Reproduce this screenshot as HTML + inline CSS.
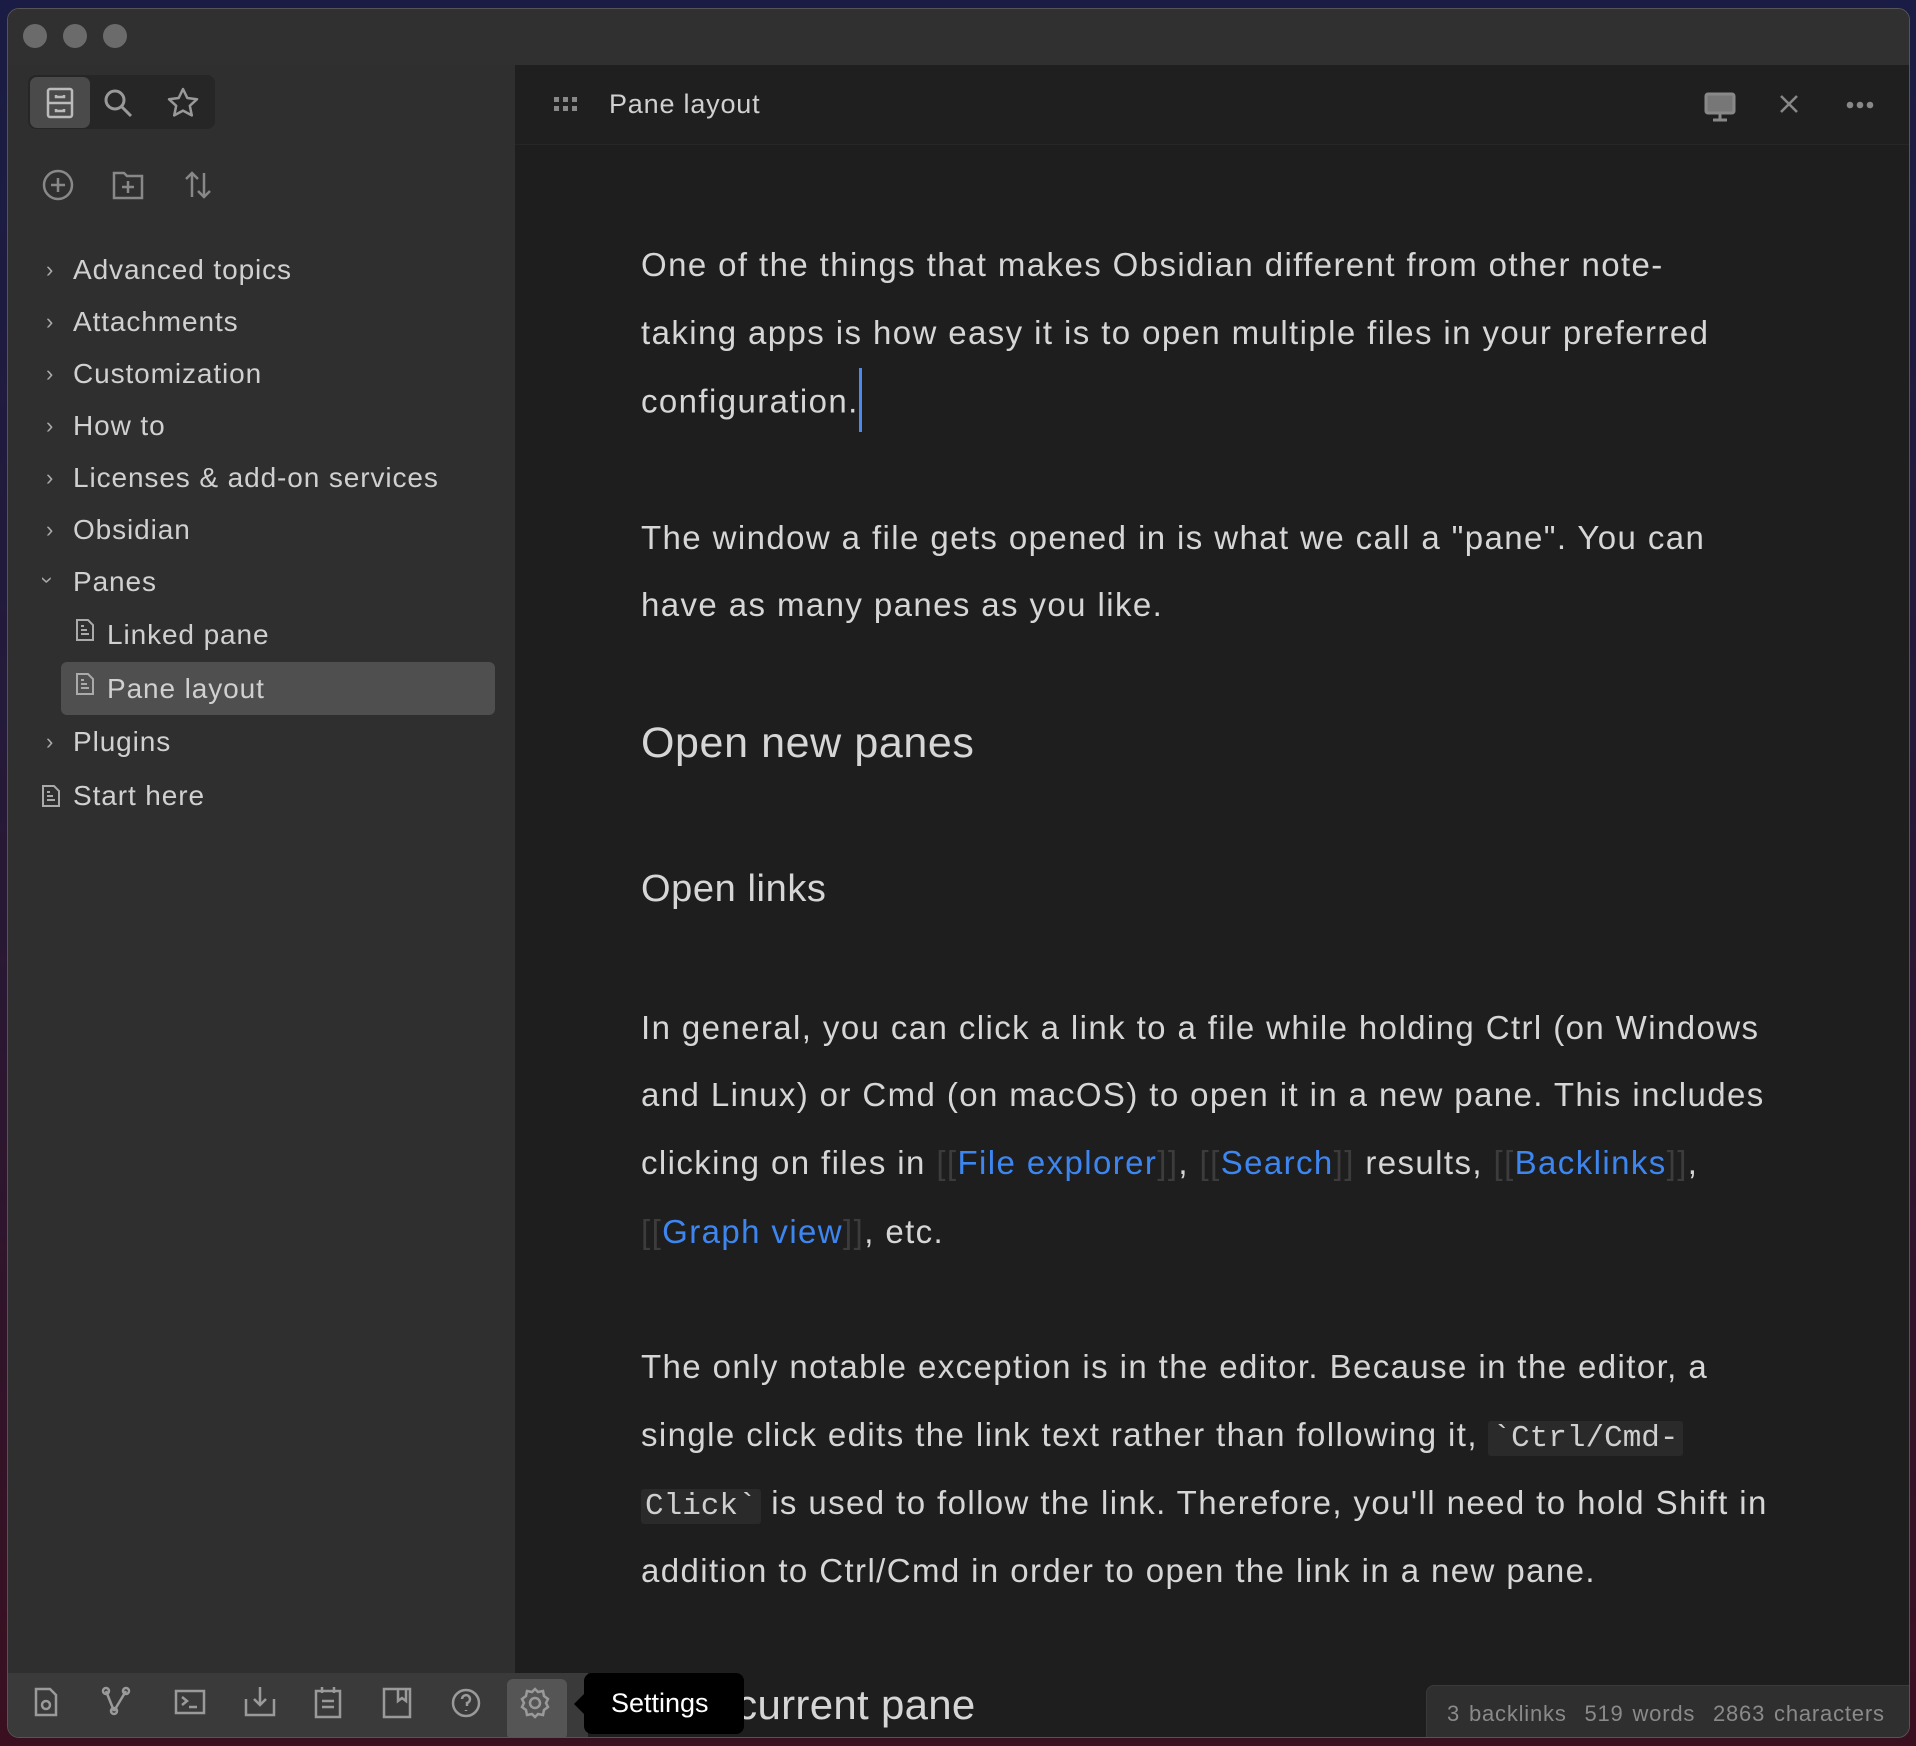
<!DOCTYPE html>
<html><head><meta charset="utf-8"><style>
*{margin:0;padding:0;box-sizing:border-box}
body{width:1916px;height:1746px;overflow:hidden;background:linear-gradient(180deg,#1a1c45 0%,#241a3a 40%,#3a1020 100%);font-family:"Liberation Sans",sans-serif;position:relative}
.win{position:absolute;left:7px;top:8px;width:1903px;height:1730px;border-radius:12px;overflow:hidden;background:#1e1e1e;border:1px solid #555}
.title{position:absolute;left:0;top:0;width:100%;height:56px;background:#303030}
.tl{position:absolute;top:15px;width:24px;height:24px;border-radius:50%;background:#6b6b6b}
.side{position:absolute;left:0;top:56px;width:507px;height:1674px;background:#2f2f2f}
.a{position:absolute;white-space:nowrap}
.t{color:#d0d0d0;font-size:28px;line-height:40px;letter-spacing:0.9px}
.c{color:#aaa;font-size:22px;letter-spacing:0}
.p{color:#d6d6d6;font-size:33px;line-height:50px;letter-spacing:1.4px}
.lk{color:#3d86f0}
.br{color:#3c3c3c}
code{font-family:"Liberation Mono",monospace;font-size:31px;letter-spacing:0;background:#2a2a2a;color:#cfcfcf;padding:0 4px;border-radius:3px}
svg{position:absolute}
</style></head><body>
<div class="win">
<div class="title">
<div class="tl" style="left:15px"></div><div class="tl" style="left:55px"></div><div class="tl" style="left:95px"></div>
</div>
<div class="side">
 <div style="position:absolute;left:20px;top:10px;width:187px;height:54px;background:#262626;border-radius:8px"></div>
 <div style="position:absolute;left:22px;top:12px;width:60px;height:51px;background:#4a4a4a;border-radius:7px"></div>
 <svg style="left:36px;top:20px" width="32" height="36" viewBox="0 0 32 36" fill="none" stroke="#bbb" stroke-width="2.5"><rect x="4" y="4" width="24" height="28" rx="2"/><line x1="4" y1="18" x2="28" y2="18"/><path d="M12 10v2h8v-2M12 24v2h8v-2"/></svg>
 <svg style="left:94px;top:22px" width="34" height="34" viewBox="0 0 34 34" fill="none" stroke="#999" stroke-width="3"><circle cx="13" cy="13" r="9"/><line x1="20" y1="20" x2="29" y2="29"/></svg>
 <svg style="left:158px;top:21px" width="34" height="34" viewBox="0 0 34 34" fill="none" stroke="#999" stroke-width="2.5" stroke-linejoin="round"><path d="M17 3l4.3 9 9.7 1.2-7.2 6.6 2 9.6L17 24.6 8.2 29.4l2-9.6L3 13.2 12.7 12z"/></svg>
 <svg style="left:34px;top:104px" width="32" height="32" viewBox="0 0 32 32" fill="none" stroke="#888" stroke-width="2.5"><circle cx="16" cy="16" r="14"/><path d="M16 9v14M9 16h14"/></svg>
 <svg style="left:104px;top:104px" width="32" height="32" viewBox="0 0 32 32" fill="none" stroke="#888" stroke-width="2.5"><path d="M2 4h10l3 3h15v22H2z"/><path d="M16 12v12M10 18h12"/></svg>
 <svg style="left:176px;top:104px" width="28" height="32" viewBox="0 0 28 32" fill="none" stroke="#888" stroke-width="2.5"><path d="M8 28V4M2 10l6-6 6 6M20 4v24M14 22l6 6 6-6"/></svg>
 <div class="a t c" style="left:38px;top:185px">›</div><div class="a t" style="left:65px;top:185px">Advanced topics</div>
 <div class="a t c" style="left:38px;top:237px">›</div><div class="a t" style="left:65px;top:237px">Attachments</div>
 <div class="a t c" style="left:38px;top:289px">›</div><div class="a t" style="left:65px;top:289px">Customization</div>
 <div class="a t c" style="left:38px;top:341px">›</div><div class="a t" style="left:65px;top:341px">How to</div>
 <div class="a t c" style="left:38px;top:393px">›</div><div class="a t" style="left:65px;top:393px">Licenses &amp; add-on services</div>
 <div class="a t c" style="left:38px;top:445px">›</div><div class="a t" style="left:65px;top:445px">Obsidian</div>
 <div class="a t c" style="left:36px;top:495px;transform:rotate(90deg)">›</div><div class="a t" style="left:65px;top:497px">Panes</div>
 <svg style="left:67px;top:553px" width="20" height="24" viewBox="0 0 20 24" fill="none" stroke="#aaa" stroke-width="2"><path d="M2 2h11l5 5v15H2z M6 12h6M6 16h8M6 8h3"/></svg>
 <div class="a t" style="left:99px;top:550px">Linked pane</div>
 <div style="position:absolute;left:53px;top:597px;width:434px;height:53px;background:#4f4f4f;border-radius:6px"></div>
 <svg style="left:67px;top:607px" width="20" height="24" viewBox="0 0 20 24" fill="none" stroke="#aaa" stroke-width="2"><path d="M2 2h11l5 5v15H2z M6 12h6M6 16h8M6 8h3"/></svg>
 <div class="a t" style="left:99px;top:604px">Pane layout</div>
 <div class="a t c" style="left:38px;top:657px">›</div><div class="a t" style="left:65px;top:657px">Plugins</div>
 <svg style="left:33px;top:719px" width="20" height="24" viewBox="0 0 20 24" fill="none" stroke="#aaa" stroke-width="2"><path d="M2 2h11l5 5v15H2z M6 12h6M6 16h8M6 8h3"/></svg>
 <div class="a t" style="left:65px;top:711px">Start here</div>
 <div style="position:absolute;left:0;top:1608px;width:580px;height:66px;background:#3a3a3a"></div>
 <div style="position:absolute;left:499px;top:1614px;width:60px;height:61px;background:#555;border-radius:6px"></div>
 <svg style="left:18px;top:1616px" width="560" height="40" viewBox="0 0 560 40" fill="none" stroke="#9a9a9a" stroke-width="2.5">
  <path d="M10 8h14l6 6v20H10z"/><circle cx="20" cy="24" r="4"/>
  <circle cx="80" cy="10" r="3"/><circle cx="100" cy="10" r="3"/><circle cx="88" cy="30" r="3"/><path d="M80 10l8 20M100 10l-12 20"/>
  <rect x="150" y="10" width="28" height="22"/><path d="M156 16l5 4-5 4M163 26h8"/>
  <path d="M220 18v16h28V18M234 6v18M228 18l6 6 6-6"/>
  <rect x="290" y="10" width="24" height="26"/><path d="M296 6v6M308 6v6M296 20h12M296 26h12"/>
  <path d="M358 8h26v28h-26zM372 8v12l4-3 4 3V8"/>
  <circle cx="440" cy="22" r="13"/><path d="M436 18a4 4 0 1 1 5 4v3M440 29v1"/>
  <circle cx="509" cy="22" r="5"/><path d="M509 8l3 3 5-1 1 5 4 3-2 4 2 4-4 3-1 5-5-1-3 3-3-3-5 1-1-5-4-3 2-4-2-4 4-3 1-5 5 1z"/>
 </svg>
</div>
<div style="position:absolute;left:507px;top:56px;width:1396px;height:80px;background:#1f1f1f;border-bottom:1px solid #262626"></div>
<svg style="left:546px;top:88px" width="24" height="18" viewBox="0 0 24 18" fill="#888"><rect x="0" y="0" width="5" height="5"/><rect x="9" y="0" width="5" height="5"/><rect x="18" y="0" width="5" height="5"/><rect x="0" y="9" width="5" height="5"/><rect x="9" y="9" width="5" height="5"/><rect x="18" y="9" width="5" height="5"/></svg>
<div class="a" style="left:601px;top:75px;font-size:27px;line-height:40px;color:#d0d0d0;letter-spacing:0.8px">Pane layout</div>
<svg style="left:1695px;top:82px" width="34" height="32" viewBox="0 0 34 32" fill="none" stroke="#888" stroke-width="3"><rect x="3" y="3" width="28" height="19" rx="2" fill="#777"/><path d="M17 22v6M10 29h14"/></svg>
<svg style="left:1770px;top:84px" width="22" height="22" viewBox="0 0 22 22" stroke="#888" stroke-width="2.5"><path d="M3 3l16 16M19 3L3 19"/></svg>
<svg style="left:1838px;top:92px" width="28" height="8" viewBox="0 0 28 8" fill="#888"><circle cx="4" cy="4" r="3.3"/><circle cx="14" cy="4" r="3.3"/><circle cx="24" cy="4" r="3.3"/></svg>

<div class="a p" style="left:633px;top:231px">One of the things that makes Obsidian different from other note-</div>
<div class="a p" style="left:633px;top:299px">taking apps is how easy it is to open multiple files in your preferred</div>
<div class="a p" style="left:633px;top:367px">configuration.<span style="display:inline-block;width:3px;height:64px;background:#4a8af0;vertical-align:middle;margin-top:-8px"></span></div>
<div class="a p" style="left:633px;top:504px">The window a file gets opened in is what we call a "pane". You can</div>
<div class="a p" style="left:633px;top:571px">have as many panes as you like.</div>
<div class="a" style="left:633px;top:708px;font-size:43px;line-height:52px;color:#d6d6d6;letter-spacing:0.6px">Open new panes</div>
<div class="a" style="left:633px;top:856px;font-size:38px;line-height:48px;color:#d6d6d6;letter-spacing:0.6px">Open links</div>
<div class="a p" style="left:633px;top:994px">In general, you can click a link to a file while holding Ctrl (on Windows</div>
<div class="a p" style="left:633px;top:1061px">and Linux) or Cmd (on macOS) to open it in a new pane. This includes</div>
<div class="a p" style="left:633px;top:1129px">clicking on files in <span class="br">[[</span><span class="lk">File explorer</span><span class="br">]]</span>, <span class="br">[[</span><span class="lk">Search</span><span class="br">]]</span> results, <span class="br">[[</span><span class="lk">Backlinks</span><span class="br">]]</span>,</div>
<div class="a p" style="left:633px;top:1198px"><span class="br">[[</span><span class="lk">Graph view</span><span class="br">]]</span>, etc.</div>
<div class="a p" style="left:633px;top:1333px">The only notable exception is in the editor. Because in the editor, a</div>
<div class="a p" style="left:633px;top:1401px">single click edits the link text rather than following it, <code>`Ctrl/Cmd-</code></div>
<div class="a p" style="left:633px;top:1469px"><code>Click`</code> is used to follow the link. Therefore, you'll need to hold Shift in</div>
<div class="a p" style="left:633px;top:1537px">addition to Ctrl/Cmd in order to open the link in a new pane.</div>
<div class="a" style="left:633px;top:1670px;font-size:42px;line-height:52px;color:#d6d6d6;letter-spacing:0.3px">Split current pane</div>

<div style="position:absolute;left:576px;top:1664px;width:160px;height:61px;background:#000;border-radius:8px"></div>
<div style="position:absolute;left:566px;top:1685px;width:0;height:0;border:10px solid transparent;border-right-color:#000;border-left:0"></div>
<div class="a" style="left:603px;top:1676px;font-size:27px;line-height:36px;color:#fff">Settings</div>

<div style="position:absolute;left:1418px;top:1676px;width:490px;height:60px;background:#2f2f2f;border-radius:8px 0 0 0;border:1px solid #3a3a3a"></div>
<div class="a" style="left:1439px;top:1690px;font-size:22px;line-height:30px;color:#8a8a8a;letter-spacing:0.8px;word-spacing:2px">3 backlinks &nbsp;519 words &nbsp;2863 characters</div>
</div>
</body></html>
